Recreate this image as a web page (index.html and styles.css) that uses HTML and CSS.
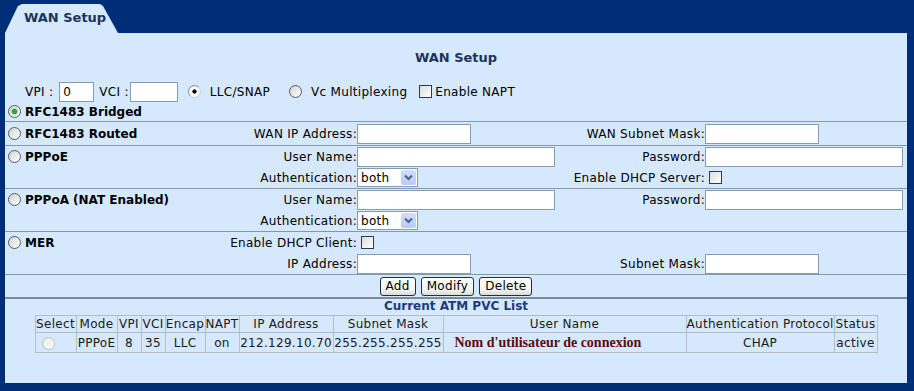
FILE: index.html
```html
<!DOCTYPE html>
<html>
<head>
<meta charset="utf-8">
<title>WAN Setup</title>
<link rel="stylesheet" href="styles.css">
</head>
<body>
<div class="page">
  <div class="tab">WAN Setup</div>
  <div class="panel">
    <h1 class="title">WAN Setup</h1>

    <div class="vc-row">
      <span>VPI :</span>
      <input class="txt vpi" type="text" value="0">
      <span class="vci-lbl">VCI :</span>
      <input class="txt vci" type="text" value="">
      <input class="radio classic llc" type="radio" name="encap" checked>
      <span class="llc-lbl">LLC/SNAP</span>
      <input class="radio vcmux" type="radio" name="encap">
      <span class="vcmux-lbl">Vc Multiplexing</span>
      <input class="check napt" type="checkbox">
      <span class="napt-lbl">Enable NAPT</span>
    </div>

    <div class="bridged">
      <input class="radio" type="radio" name="mode" checked>
      <span>RFC1483 Bridged</span>
    </div>

    <div class="section routed">
      <div class="name"><input class="radio" type="radio" name="mode"><span>RFC1483 Routed</span></div>
      <div class="lbl">WAN IP Address:</div>
      <div class="fld"><input class="txt short" type="text"></div>
      <div class="lbl">WAN Subnet Mask:</div>
      <div class="fld"><input class="txt short" type="text"></div>
    </div>

    <div class="section">
      <div class="name"><input class="radio" type="radio" name="mode"><span>PPPoE</span></div>
      <div class="lbl">User Name:</div>
      <div class="fld"><input class="txt long" type="text"></div>
      <div class="lbl">Password:</div>
      <div class="fld"><input class="txt long" type="password"></div>
      <div class="lbl c2">Authentication:</div>
      <div class="fld">
        <div class="select"><span class="sel-text">both</span><span class="sel-arrow"><svg width="9" height="7" viewBox="0 0 9 7"><path d="M1 1.5 L4.5 5 L8 1.5" fill="none" stroke="#4d6185" stroke-width="2"/></svg></span></div>
      </div>
      <div class="lbl">Enable DHCP Server:</div>
      <div class="fld"><input class="check" type="checkbox"></div>
    </div>

    <div class="section">
      <div class="name"><input class="radio" type="radio" name="mode"><span>PPPoA (NAT Enabled)</span></div>
      <div class="lbl">User Name:</div>
      <div class="fld"><input class="txt long" type="text"></div>
      <div class="lbl">Password:</div>
      <div class="fld"><input class="txt long" type="password"></div>
      <div class="lbl c2">Authentication:</div>
      <div class="fld">
        <div class="select"><span class="sel-text">both</span><span class="sel-arrow"><svg width="9" height="7" viewBox="0 0 9 7"><path d="M1 1.5 L4.5 5 L8 1.5" fill="none" stroke="#4d6185" stroke-width="2"/></svg></span></div>
      </div>
    </div>

    <div class="section">
      <div class="name"><input class="radio" type="radio" name="mode"><span>MER</span></div>
      <div class="lbl">Enable DHCP Client:</div>
      <div class="fld"><input class="check" type="checkbox"></div>
      <div class="lbl c2">IP Address:</div>
      <div class="fld"><input class="txt short" type="text"></div>
      <div class="lbl">Subnet Mask:</div>
      <div class="fld"><input class="txt short" type="text"></div>
    </div>

    <div class="actions">
      <button class="btn" type="button">Add</button>
      <button class="btn" type="button">Modify</button>
      <button class="btn" type="button">Delete</button>
    </div>

    <div class="list-title">Current ATM PVC List</div>
    <table class="pvc">
      <colgroup>
        <col class="w-select"><col class="w-mode"><col class="w-vpi"><col class="w-vci"><col class="w-encap"><col class="w-napt"><col class="w-ip"><col class="w-mask"><col class="w-user"><col class="w-auth"><col class="w-status">
      </colgroup>
      <thead>
        <tr>
          <th>Select</th><th>Mode</th><th>VPI</th><th>VCI</th><th>Encap</th><th>NAPT</th><th>IP Address</th><th>Subnet Mask</th><th>User Name</th><th>Authentication Protocol</th><th>Status</th>
        </tr>
      </thead>
      <tbody>
        <tr>
          <td class="sel"><input class="radio faded" type="radio" name="pvc"></td>
          <td>PPPoE</td><td>8</td><td>35</td><td>LLC</td><td>on</td><td>212.129.10.70</td><td>255.255.255.255</td>
          <td class="user">Nom d'utilisateur de connexion</td>
          <td>CHAP</td><td>active</td>
        </tr>
      </tbody>
    </table>
  </div>
</div>
</body>
</html>
```

FILE: styles.css
```css
* { box-sizing: border-box; }

html, body {
  margin: 0;
  padding: 0;
}

body {
  width: 914px;
  height: 391px;
  overflow: hidden;
  background: #002d78;
  font-family: "DejaVu Sans", Verdana, sans-serif;
  font-size: 12px;
  letter-spacing: 0.3px;
  color: #000;
}

.page {
  padding: 4px 0 0 5px;
}

.tab {
  width: 113px;
  height: 29px;
  background: #d6e8fb;
  clip-path: polygon(0 29px, 11px 6px, 13px 2px, 17px 0, 95px 0, 98px 2px, 113px 29px);
  padding: 6px 0 0 19px;
  font-size: 13px;
  line-height: 16px;
  font-weight: bold;
  letter-spacing: 0;
  color: #1a3360;
}

.panel {
  width: 902px;
  height: 350px;
  background: #d6e8fb;
  padding-top: 15px;
}

.title {
  margin: 0;
  text-align: center;
  font-size: 13px;
  line-height: 20px;
  font-weight: bold;
  letter-spacing: 0;
  color: #1a3360;
}

/* form controls */
.txt {
  height: 20px;
  margin: 0;
  padding: 0 3px;
  border: 1px solid #7f9db9;
  background: #fff;
  font-family: "DejaVu Sans", Verdana, sans-serif;
  font-size: 12px;
  color: #000;
  outline: none;
}

.short { width: 114px; }
.long { width: 198px; }

.radio {
  appearance: none;
  -webkit-appearance: none;
  width: 13px;
  height: 13px;
  margin: 0;
  flex: none;
  border-radius: 50%;
  border: 1px solid #4e5d6e;
  background: linear-gradient(135deg, #d4d4cf, #ffffff);
}

.radio:checked {
  background:
    radial-gradient(circle, #2fa52f 0, #2fa52f 2.2px, #79cd79 2.8px, transparent 3.4px),
    linear-gradient(135deg, #d4d4cf, #ffffff);
}

.radio.classic {
  border-color: #c8d4e0;
  border-top-color: #8a949e;
  border-left-color: #8a949e;
  background: #f4f8fc;
}

.radio.classic:checked {
  background:
    radial-gradient(circle, #000 0, #000 1.8px, transparent 2.4px),
    #f4f8fc;
}

.radio.faded {
  border-color: #b8c0c8;
  background: linear-gradient(135deg, #e8e8e8, #ffffff);
}

.check {
  appearance: none;
  -webkit-appearance: none;
  width: 13px;
  height: 13px;
  margin: 0;
  flex: none;
  border: 1px solid #2c3c4c;
  background: linear-gradient(135deg, #dcdcd7, #ffffff);
}

.select {
  display: flex;
  align-items: center;
  width: 61px;
  height: 19px;
  border: 1px solid #7f9db9;
  background: #fff;
}

.sel-text {
  flex: 1;
  padding-left: 3px;
}

.sel-arrow {
  display: flex;
  align-items: center;
  justify-content: center;
  width: 15px;
  height: 15px;
  margin-right: 1px;
  border-radius: 2px;
  background: linear-gradient(#d2defc, #b8cafa);
}

/* VPI / VCI row */
.vc-row {
  display: flex;
  align-items: center;
  height: 21px;
  margin-top: 13px;
  padding-left: 20px;
  white-space: nowrap;
}

.vc-row .vpi { width: 35px; margin-left: 6px; }
.vc-row .vci-lbl { margin-left: 5px; }
.vc-row .vci { width: 48px; margin-left: 1px; }
.vc-row .llc { margin-left: 10px; }
.vc-row .llc-lbl { margin-left: 9px; }
.vc-row .vcmux { margin-left: 19px; }
.vc-row .vcmux-lbl { margin-left: 9px; }
.vc-row .napt { margin-left: 12px; }
.vc-row .napt-lbl { margin-left: 3px; }

.bridged {
  display: flex;
  align-items: center;
  gap: 4px;
  height: 19px;
  padding-left: 3px;
  font-weight: bold;
  letter-spacing: 0;
}

/* sections */
.section {
  display: grid;
  grid-template-columns: 200px 152px 200px 148px 202px;
  grid-auto-rows: 21px;
  border-top: 1px solid #8797aa;
}

.section.routed {
  padding: 1px 0;
}

.name {
  grid-column: 1;
  display: flex;
  align-items: center;
  gap: 4px;
  padding-left: 3px;
  font-weight: bold;
  letter-spacing: 0;
  white-space: nowrap;
}

.lbl {
  display: flex;
  align-items: center;
  justify-content: flex-end;
  white-space: nowrap;
}

.c2 { grid-column: 2; }

.fld {
  display: flex;
  align-items: center;
}

.fld .check { margin-left: 4px; }

/* buttons */
.actions {
  display: flex;
  justify-content: center;
  gap: 5px;
  padding: 2px 0 1px;
  border-top: 1px solid #8797aa;
  border-bottom: 2px solid #7d8a98;
}

.btn {
  height: 19px;
  margin: 0;
  padding: 0 5px;
  border: 1px solid #1c2f4c;
  border-radius: 3px;
  background: linear-gradient(#ffffff, #f4f3ee 70%, #dcdad0);
  font-family: "DejaVu Sans", Verdana, sans-serif;
  font-size: 12px;
  letter-spacing: 0.3px;
  line-height: 15px;
  color: #000;
}

/* PVC list */
.list-title {
  text-align: center;
  font-weight: bold;
  letter-spacing: 0;
  line-height: 14px;
  color: #1b3b7b;
}

.pvc {
  width: 842px;
  margin: 2px auto 0;
  border-collapse: collapse;
  table-layout: fixed;
  border: 1px solid #b4bec8;
}

.pvc th,
.pvc td {
  padding: 0;
  border: 1px solid #b4bec8;
  text-align: center;
  white-space: nowrap;
  overflow: visible;
  font-weight: normal;
  color: #1a1a1a;
}

.pvc th { height: 17px; line-height: 15px; }
.pvc td { height: 20px; line-height: 18px; }

.pvc td.sel {
  text-align: left;
  padding-left: 6px;
}

.pvc td .radio { vertical-align: middle; }

.pvc td.user {
  text-align: left;
  padding-left: 11px;
  font-family: "Liberation Serif", "Times New Roman", serif;
  font-size: 14px;
  font-weight: bold;
  letter-spacing: 0;
  color: #5a0c0c;
}

.w-select { width: 41px; }
.w-mode { width: 41px; }
.w-vpi { width: 24px; }
.w-vci { width: 24px; }
.w-encap { width: 40px; }
.w-napt { width: 34px; }
.w-ip { width: 94px; }
.w-mask { width: 110px; }
.w-user { width: 243px; }
.w-auth { width: 148px; }
.w-status { width: 43px; }
```
